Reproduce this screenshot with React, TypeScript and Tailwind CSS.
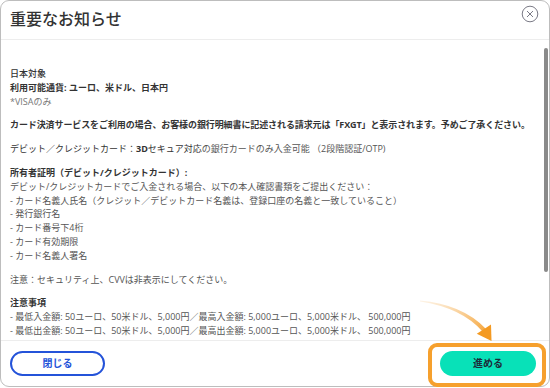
const Line = ({ children, className = "" }: { children: React.ReactNode; className?: string }) => (
  <p className={"whitespace-nowrap " + className}>{children}</p>
);

const App = () => {
  return (
    <div
      className="relative w-[550px] h-[388px] bg-white overflow-hidden"
      style={{ fontFamily: '"Open Sans", "Noto Sans CJK JP", sans-serif' }}
    >
      <div className="w-[550px] h-[387px] border border-[#bdbdbd] rounded-[9px] flex flex-col overflow-hidden bg-white">
        {/* header */}
        <div className="h-[39px] shrink-0 border-b border-[#ededed] flex items-start justify-between pl-[9px] pr-[10px]">
          <h1
            className="pt-[5px] text-[16px] leading-[24px] font-medium text-[#333]"
            style={{ fontFamily: '"Noto Sans CJK JP", sans-serif' }}
          >
            重要なお知らせ
          </h1>
          <svg width="18" height="18" viewBox="0 0 18 18" className="mt-[4px]">
            <circle cx="9" cy="9" r="7.8" fill="none" stroke="#6b6b78" strokeWidth="0.9" />
            <path d="M6 6 L12 12 M12 6 L6 12" stroke="#6b6b78" strokeWidth="0.9" />
          </svg>
        </div>

        {/* body */}
        <div className="relative flex-1 overflow-hidden pl-[9px] pr-[14px] pt-[27px] text-[9px] leading-[13.8px] text-[#555]">
          <div className="flex flex-col gap-[10px]">
            <div>
              <Line className="font-medium text-[#333]">日本対象</Line>
              <Line className="font-bold text-[#333]">利用可能通貨: ユーロ、米ドル、日本円</Line>
              <Line className="text-[#777]">*VISAのみ</Line>
            </div>
            <Line className="font-bold text-[#333] tracking-[-0.1px]">
              カード決済サービスをご利用の場合、お客様の銀行明細書に記述される請求元は「FXGT」と表示されます。予めご了承ください。
            </Line>
            <Line>
              <span className="text-[#333]">
                デビット／クレジットカード：<span className="font-bold">3D</span>セキュア対応
              </span>
              の銀行カードのみ入金可能 （2段階認証/OTP)
            </Line>
            <div>
              <Line className="font-bold text-[#333]">所有者証明（デビット/クレジットカード）:</Line>
              <Line>デビット/クレジットカードでご入金される場合、以下の本人確認書類をご提出ください：</Line>
              <Line>- カード名義人氏名（クレジット／デビットカード名義は、登録口座の名義と一致していること）</Line>
              <Line>- 発行銀行名</Line>
              <Line>- カード番号下4桁</Line>
              <Line>- カード有効期限</Line>
              <Line>- カード名義人署名</Line>
            </div>
            <Line>注意：セキュリティ上、CVVは非表示にしてください。</Line>
            <div>
              <Line className="font-bold text-[#333]">注意事項</Line>
              <Line>- 最低入金額: 50ユーロ、50米ドル、5,000円／最高入金額: 5,000ユーロ、5,000米ドル、 500,000円</Line>
              <Line>- 最低出金額: 50ユーロ、50米ドル、5,000円／最高出金額: 5,000ユーロ、5,000米ドル、 500,000円</Line>
            </div>
          </div>
          <div className="absolute right-[1px] top-[8px] w-[4px] h-[224px] rounded-full bg-[#8a8a8a]" />
        </div>

        {/* footer */}
        <div className="h-[46px] shrink-0 border-t border-[#ededed] flex items-center justify-between pl-[9px] pr-[13px]">
          <button className="w-[95px] h-[25px] rounded-full border-2 border-[#2453d9] text-[#2453d9] text-[10px] font-bold">
            閉じる
          </button>
          <button className="w-[96px] h-[25px] rounded-full bg-[#08e1b8] text-[#1d2b3a] text-[10px] font-bold">
            進める
          </button>
        </div>
      </div>

      {/* highlight */}
      <div className="absolute left-[428px] top-[343px] w-[118px] h-[44px] border-4 border-[#f6a02d] rounded-[9px]" />
      <svg className="absolute left-0 top-0 pointer-events-none" width="550" height="388" viewBox="0 0 550 388">
        <defs>
          <linearGradient id="arr" x1="420" y1="300" x2="490" y2="340" gradientUnits="userSpaceOnUse">
            <stop offset="0" stopColor="#fbe3c2" stopOpacity="0.4" />
            <stop offset="1" stopColor="#f49a22" />
          </linearGradient>
        </defs>
        <path d="M420 300.6 Q462.5 304.5 485.5 328.6 L482.5 331.4 Q461.5 307.5 420 301.4 Z" fill="url(#arr)" />
        <path d="M476.8 333.8 L491.5 341 L491 324.6 Z" fill="#f49a22" />
      </svg>
    </div>
  );
};

export default App;
